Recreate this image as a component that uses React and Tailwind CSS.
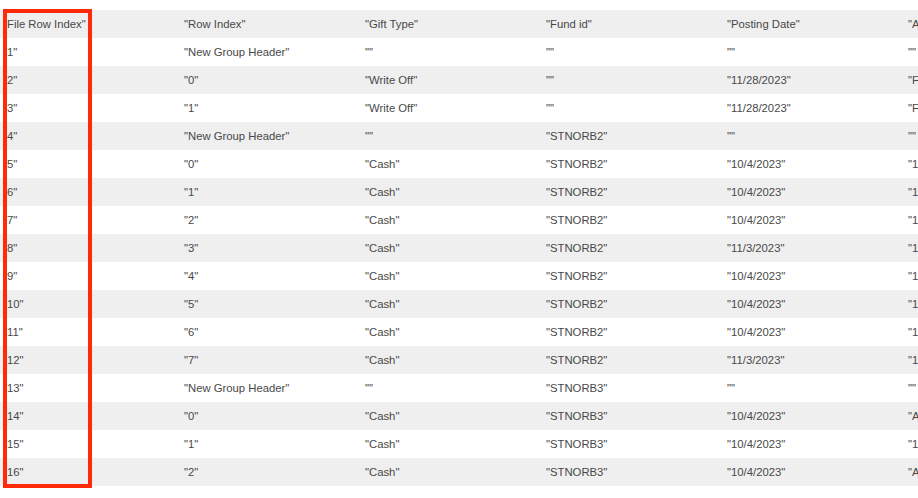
import React from "react";

const header = ['"File Row Index"', '"Row Index"', '"Gift Type"', '"Fund id"', '"Posting Date"', '"Amount"'];
const q = (s) => `"${s}"`;
const rows = [
  ["1", "New Group Header", "", "", "", ""],
  ["2", "0", "Write Off", "", "11/28/2023", "Fund"],
  ["3", "1", "Write Off", "", "11/28/2023", "Fund"],
  ["4", "New Group Header", "", "STNORB2", "", ""],
  ["5", "0", "Cash", "STNORB2", "10/4/2023", "100"],
  ["6", "1", "Cash", "STNORB2", "10/4/2023", "100"],
  ["7", "2", "Cash", "STNORB2", "10/4/2023", "100"],
  ["8", "3", "Cash", "STNORB2", "11/3/2023", "100"],
  ["9", "4", "Cash", "STNORB2", "10/4/2023", "100"],
  ["10", "5", "Cash", "STNORB2", "10/4/2023", "100"],
  ["11", "6", "Cash", "STNORB2", "10/4/2023", "100"],
  ["12", "7", "Cash", "STNORB2", "11/3/2023", "100"],
  ["13", "New Group Header", "", "STNORB3", "", ""],
  ["14", "0", "Cash", "STNORB3", "10/4/2023", "Amt"],
  ["15", "1", "Cash", "STNORB3", "10/4/2023", "100"],
  ["16", "2", "Cash", "STNORB3", "10/4/2023", "Amt"],
];

function Row({ cells, grey }) {
  return (
    <div className={`flex h-[28px] items-center ${grey ? "bg-[#efefef]" : "bg-white"}`}>
      {cells.map((c, i) => (
        <div key={i} className="w-[181px] shrink-0 pl-[3px] whitespace-nowrap overflow-hidden">
          {c}
        </div>
      ))}
    </div>
  );
}

export default function App() {
  return (
    <div className="relative w-[918px] h-[498px] overflow-hidden bg-white text-[11.3px] text-[#484848] font-['Liberation_Sans',Arial,sans-serif]">
      <div className="pt-[10px] w-[1100px]">
        <Row cells={header} grey />
        {rows.map((r, i) => (
          <Row key={i} cells={r.map(q)} grey={i % 2 === 1} />
        ))}
      </div>
      <div className="absolute left-[3px] top-[9px] w-[89px] h-[479px] border-[4px] border-[#ff2a0a]" />
    </div>
  );
}
